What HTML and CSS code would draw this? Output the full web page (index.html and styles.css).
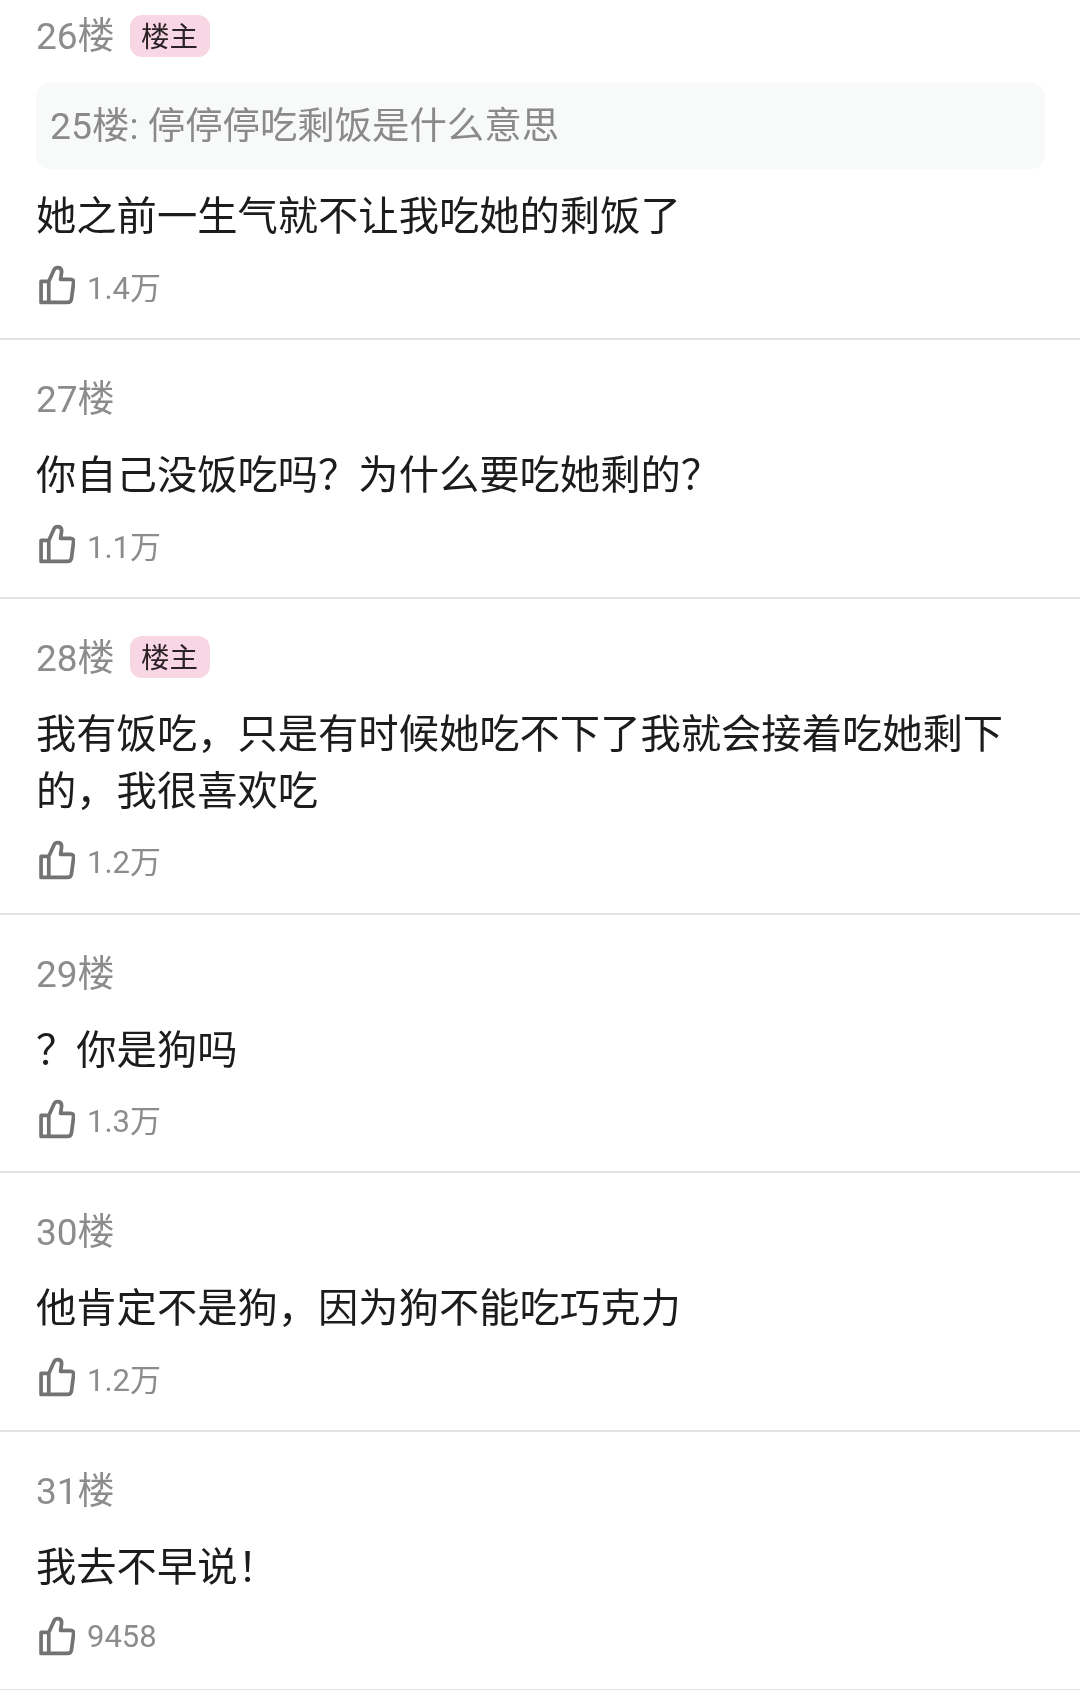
FILE: index.html
```html
<!DOCTYPE html>
<html lang="zh-CN">
<head>
<meta charset="utf-8">
<title>评论</title>
<link rel="stylesheet" href="styles.css">
</head>
<body>
<svg class="defs" width="0" height="0" aria-hidden="true">
  <symbol id="thumb" viewBox="0 0 36 38">
    <path d="M10.5 15.5 L15.5 4.5 Q16.5 2 19 2 Q23 2 23 6 L22 13.5 L31.5 13.5 Q35 13.5 34.6 17 L32.6 32.5 Q32.2 36 28.5 36 L3 36 L3 15.5 L10.5 15.5 L10.5 36" fill="none" stroke="currentColor" stroke-width="3.6" stroke-linejoin="round"/>
  </symbol>
</svg>
<main class="list">
  <article class="post post-first">
    <header class="head"><span class="floor">26楼</span><span class="badge">楼主</span></header>
    <div class="quote">25楼: 停停停吃剩饭是什么意思</div>
    <p class="text">她之前一生气就不让我吃她的剩饭了</p>
    <footer class="likes"><svg class="icon"><use href="#thumb"/></svg><span>1.4万</span></footer>
  </article>
  <article class="post">
    <header class="head"><span class="floor">27楼</span></header>
    <p class="text">你自己没饭吃吗？为什么要吃她剩的？</p>
    <footer class="likes"><svg class="icon"><use href="#thumb"/></svg><span>1.1万</span></footer>
  </article>
  <article class="post">
    <header class="head"><span class="floor">28楼</span><span class="badge">楼主</span></header>
    <p class="text">我有饭吃，只是有时候她吃不下了我就会接着吃她剩下的，我很喜欢吃</p>
    <footer class="likes"><svg class="icon"><use href="#thumb"/></svg><span>1.2万</span></footer>
  </article>
  <article class="post">
    <header class="head"><span class="floor">29楼</span></header>
    <p class="text">？你是狗吗</p>
    <footer class="likes"><svg class="icon"><use href="#thumb"/></svg><span>1.3万</span></footer>
  </article>
  <article class="post">
    <header class="head"><span class="floor">30楼</span></header>
    <p class="text">他肯定不是狗，因为狗不能吃巧克力</p>
    <footer class="likes"><svg class="icon"><use href="#thumb"/></svg><span>1.2万</span></footer>
  </article>
  <article class="post">
    <header class="head"><span class="floor">31楼</span></header>
    <p class="text">我去不早说！</p>
    <footer class="likes"><svg class="icon"><use href="#thumb"/></svg><span>9458</span></footer>
  </article>
</main>
</body>
</html>
```
FILE: styles.css
```css
html, body {
  margin: 0;
  padding: 0;
  background: #fff;
}
body {
  width: 1080px;
  height: 1690px;
  overflow: hidden;
  font-family: Roboto, "Noto Sans CJK SC", sans-serif;
}
.defs {
  display: block;
  height: 0;
}
.list {
  filter: blur(0.4px);
}
.post {
  box-sizing: border-box;
  padding: 40px 50px 30.8px 36px;
  border-bottom: 2px solid #e2e2e5;
}
.post-first {
  padding-top: 17px;
  padding-bottom: 31px;
}
.head {
  display: flex;
  align-items: center;
  gap: 15px;
  height: 40px;
}
.floor {
  font-size: 37px;
  line-height: 40px;
  color: #8c8c8c;
}
.badge {
  padding: 0 11.5px;
  height: 42px;
  margin-bottom: 3px;
  line-height: 45px;
  font-size: 28.5px;
  color: #2a2226;
  background: #f9d6e3;
  border-radius: 12px;
}
.quote {
  margin: 26px -15px 0 0;
  padding: 0 14px;
  height: 86px;
  line-height: 86px;
  font-size: 37.4px;
  color: #8a8a8a;
  background: #f8f9f9;
  border-radius: 14px;
}
.text {
  margin: 27px 0 0;
  font-size: 40.3px;
  line-height: 57px;
  color: #1c1c1c;
}
.post-first .text {
  margin-top: 19px;
}
.likes {
  display: flex;
  align-items: center;
  gap: 12px;
  height: 44px;
  margin-top: 18px;
  font-size: 31px;
  color: #8c8c8c;
}
.icon {
  width: 37px;
  height: 40px;
  margin-left: 2px;
  color: #737373;
}
```
